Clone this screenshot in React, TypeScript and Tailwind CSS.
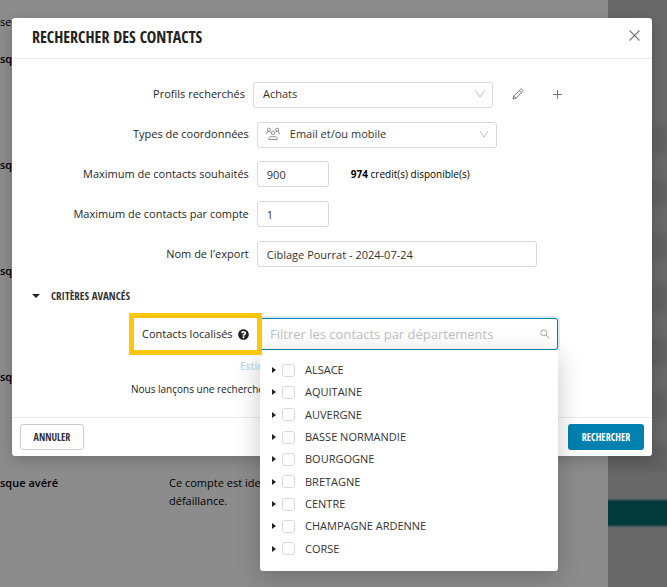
import type { ReactNode } from 'react'
import { FaQuestionCircle } from 'react-icons/fa'

const REGIONS = [
  'ALSACE',
  'AQUITAINE',
  'AUVERGNE',
  'BASSE NORMANDIE',
  'BOURGOGNE',
  'BRETAGNE',
  'CENTRE',
  'CHAMPAGNE ARDENNE',
  'CORSE',
]

const field = 'rounded-[3px] border border-[#d9d9d9] bg-white text-[11px] text-[#333] outline-none'
const condensed = "font-['Open_Sans_Condensed','Liberation_Sans_Narrow',sans-serif]"

function Chevron() {
  return (
    <svg
      className="pointer-events-none absolute top-1/2 right-2 h-[10px] w-[10px] -translate-y-1/2"
      viewBox="0 0 10 10"
      fill="none"
      stroke="#bfbfbf"
    >
      <path d="M1 2l4 6 4-6" />
    </svg>
  )
}

function PeopleIcon() {
  return (
    <svg
      className="pointer-events-none absolute top-1/2 left-[9px] h-[14px] w-[14px] -translate-y-1/2"
      viewBox="0 0 14 14"
      fill="none"
      stroke="#777"
      strokeWidth=".8"
    >
      <circle cx="2.8" cy="2.7" r="1.6" />
      <circle cx="11.2" cy="2.7" r="1.6" />
      <circle cx="7" cy="5.8" r="1.7" />
      <path d="M.5 7.2c0-1.8 1-2.8 2.3-2.8.8 0 1.4.4 1.8 1M13.5 7.2c0-1.8-1-2.8-2.3-2.8-.8 0-1.4.4-1.8 1M2.8 12.5v-.8c0-1.3 1-2 2-2h4.4c1 0 2 .7 2 2v.8z" />
    </svg>
  )
}

function Row({ id, label, children }: { id: string; label: string; children: ReactNode }) {
  return (
    <div className="flex h-10 items-center gap-2">
      <label htmlFor={id} className="w-[37%] shrink-0 text-right text-[11px] font-medium text-[#262626]">
        {label}
      </label>
      {children}
    </div>
  )
}

function PageBehind() {
  return (
    <div className="flex h-full overflow-hidden text-[11px] text-black">
      <div className="min-w-0 flex-1 bg-[#8c8c8c] pt-[13px]">
        <p className="mb-[19px] leading-[18px] font-medium">se déclaré</p>
        {[0, 1, 2, 3].map((i) => (
          <p key={i} className="h-[106px] leading-[18px] font-semibold">
            sque
          </p>
        ))}
        <div className="flex leading-[18px]">
          <p className="w-[169px] shrink-0 font-semibold">sque avéré</p>
          <p className="whitespace-nowrap">
            Ce compte est identifié
            <br />
            défaillance.
          </p>
        </div>
      </div>
      <div className="flex w-[59px] shrink-0 flex-col overflow-hidden bg-[#686868] pt-[127px]">
        {[0, 1, 2, 3, 4, 5, 6].map((i) => (
          <div key={i} className="mb-[27px] h-[26px] shrink-0 bg-[#616161] blur-[2px]" />
        ))}
        <div className="-mx-2 mt-[2px] h-[26px] shrink-0 bg-[#02393b] blur-[1px]" />
      </div>
    </div>
  )
}

function RegionPicker() {
  return (
    <div className="absolute top-full right-0 left-0 rounded-b-[3px] bg-white px-3 pt-[9px] pb-[11px] shadow-[0_6px_26px_rgba(0,0,0,0.22)]">
      <ul className="grid h-[201px] auto-rows-fr">
        {REGIONS.map((name) => (
          <li key={name} className="flex items-center">
            <button type="button" aria-label={`Ouvrir ${name}`} className="mr-[7px] flex h-3 w-[3px] items-center">
              <svg className="h-[6px] w-[4px] shrink-0" viewBox="0 0 4 6">
                <path d="M0 0l4 3-4 3z" fill="#222" />
              </svg>
            </button>
            <label className="flex items-center gap-[10px] text-[11px] text-[#333]">
              <input
                type="checkbox"
                className="h-[13px] w-[13px] appearance-none rounded-[3px] border border-[#d9d9d9] bg-white"
              />
              {name}
            </label>
          </li>
        ))}
      </ul>
    </div>
  )
}

export default function App() {
  return (
    <div className="relative h-screen overflow-hidden font-['Open_Sans','Noto_Sans',sans-serif]">
      <PageBehind />

      <div className="absolute inset-x-0 top-0 pt-[18px] pr-[15px] pl-3">
        <div role="dialog" aria-labelledby="title" className="rounded-[3px] bg-white shadow-[0_4px_14px_rgba(0,0,0,0.2)]">
          <header className="flex h-[41px] items-center justify-between border-b border-[#ececec] pr-3 pb-[2px] pl-5">
            <h1 id="title" className={`${condensed} text-base font-semibold text-[#222]`}>
              RECHERCHER DES CONTACTS
            </h1>
            <button type="button" aria-label="Fermer" className="-mt-1">
              <svg className="h-[11px] w-[11px]" viewBox="0 0 11 11" stroke="#777" strokeWidth="1.1">
                <path d="M.5.5l10 10M10.5.5l-10 10" />
              </svg>
            </button>
          </header>

          <form className="pt-[15px] pb-4">
            <div className="flex h-10 items-center gap-2">
              <label htmlFor="profil" className="w-[233px] shrink-0 text-right text-[11px] font-medium text-[#262626]">
                Profils recherchés
              </label>
              <div className="relative w-[240px]">
                <select id="profil" className={`${field} h-[26px] w-full appearance-none pl-[9px]`}>
                  <option>Achats</option>
                </select>
                <Chevron />
              </div>
              <button type="button" aria-label="Modifier" className="ml-[11px]">
                <svg className="h-3 w-3" viewBox="0 0 12 12" fill="none" stroke="#555" strokeWidth=".8">
                  <path d="M1 11l.8-3L8.3 1.5c.6-.6 1.2-.6 1.7-.1l.6.6c.5.5.5 1.1-.1 1.7L4 10.2zM7.3 2.5l2.2 2.2M1.8 8L4 10.2" />
                </svg>
              </button>
              <button type="button" aria-label="Ajouter" className="ml-[21px]">
                <svg className="h-[9px] w-[9px]" viewBox="0 0 9 9" stroke="#777">
                  <path d="M4.5 0v9M0 4.5h9" />
                </svg>
              </button>
            </div>

            <Row id="types" label="Types de coordonnées">
              <div className="relative w-[240px]">
                <PeopleIcon />
                <select id="types" className={`${field} h-[26px] w-full appearance-none pl-8`}>
                  <option>Email et/ou mobile</option>
                </select>
                <Chevron />
              </div>
            </Row>
            <Row id="max" label="Maximum de contacts souhaités">
              <input id="max" defaultValue="900" className={`${field} h-[26px] w-[72px] px-[9px]`} />
              <p className="ml-[14px] text-[10px] text-black">
                <b>974</b> credit(s) disponible(s)
              </p>
            </Row>
            <Row id="compte" label="Maximum de contacts par compte">
              <input id="compte" defaultValue="1" className={`${field} h-[26px] w-[72px] px-[9px]`} />
            </Row>
            <Row id="export" label="Nom de l'export">
              <input
                id="export"
                defaultValue="Ciblage Pourrat - 2024-07-24"
                className={`${field} h-[26px] w-[280px] px-[9px]`}
              />
            </Row>

            <button type="button" className="mt-3 ml-5 flex h-5 items-center gap-[11px]">
              <svg className="h-1 w-2" viewBox="0 0 8 4">
                <path d="M0 0h8L4 4z" fill="#222" />
              </svg>
              <span className={`${condensed} text-[11px] font-medium text-[#333]`}>CRITÈRES AVANCÉS</span>
            </button>

            <div className="mt-[7px] ml-[117px] flex items-center">
              <div className="relative z-20 -mr-[2px] flex h-[42px] w-[133px] items-center gap-[5px] border-[5px] border-[#ffc60b] bg-white pl-2">
                <label htmlFor="regions" className="text-[11px] font-medium whitespace-nowrap text-[#262626]">
                  Contacts localisés
                </label>
                <FaQuestionCircle className="h-[11px] w-[11px] shrink-0 text-[#222]" />
              </div>
              <div className="relative z-10 w-[298px]">
                <input
                  id="regions"
                  placeholder="Filtrer les contacts par départements"
                  className="block h-8 w-full rounded-[3px] border border-[#0081b0] bg-white pl-[9px] text-[13px] shadow-[0_0_0_2px_rgba(0,129,176,0.15)] outline-none placeholder:text-[#bfbfbf]"
                />
                <svg
                  className="absolute top-[11px] right-2 h-[10px] w-[10px]"
                  viewBox="0 0 10 10"
                  fill="none"
                  stroke="#aaa"
                >
                  <circle cx="3.8" cy="3.8" r="3" />
                  <path d="M6 6l3.5 3.5" />
                </svg>
                <RegionPicker />
              </div>
            </div>

            <p className="ml-[228px] text-[10px] leading-[22px] font-semibold text-[#b9dfee]">Estimer</p>
            <p className="ml-[119px] text-[10px] leading-6 text-[#222]">Nous lançons une recherche</p>
          </form>

          <footer className="flex h-[39px] items-center justify-between border-t border-[#ececec] px-2">
            <button
              type="button"
              className={`${condensed} h-[26px] w-16 rounded-[3px] border border-[#ccc] bg-white text-[10px] font-bold text-[#333]`}
            >
              ANNULER
            </button>
            <button
              type="button"
              className={`${condensed} h-[26px] w-[76px] rounded-[3px] bg-[#0081b0] text-[10px] font-bold text-white`}
            >
              RECHERCHER
            </button>
          </footer>
        </div>
      </div>
    </div>
  )
}
